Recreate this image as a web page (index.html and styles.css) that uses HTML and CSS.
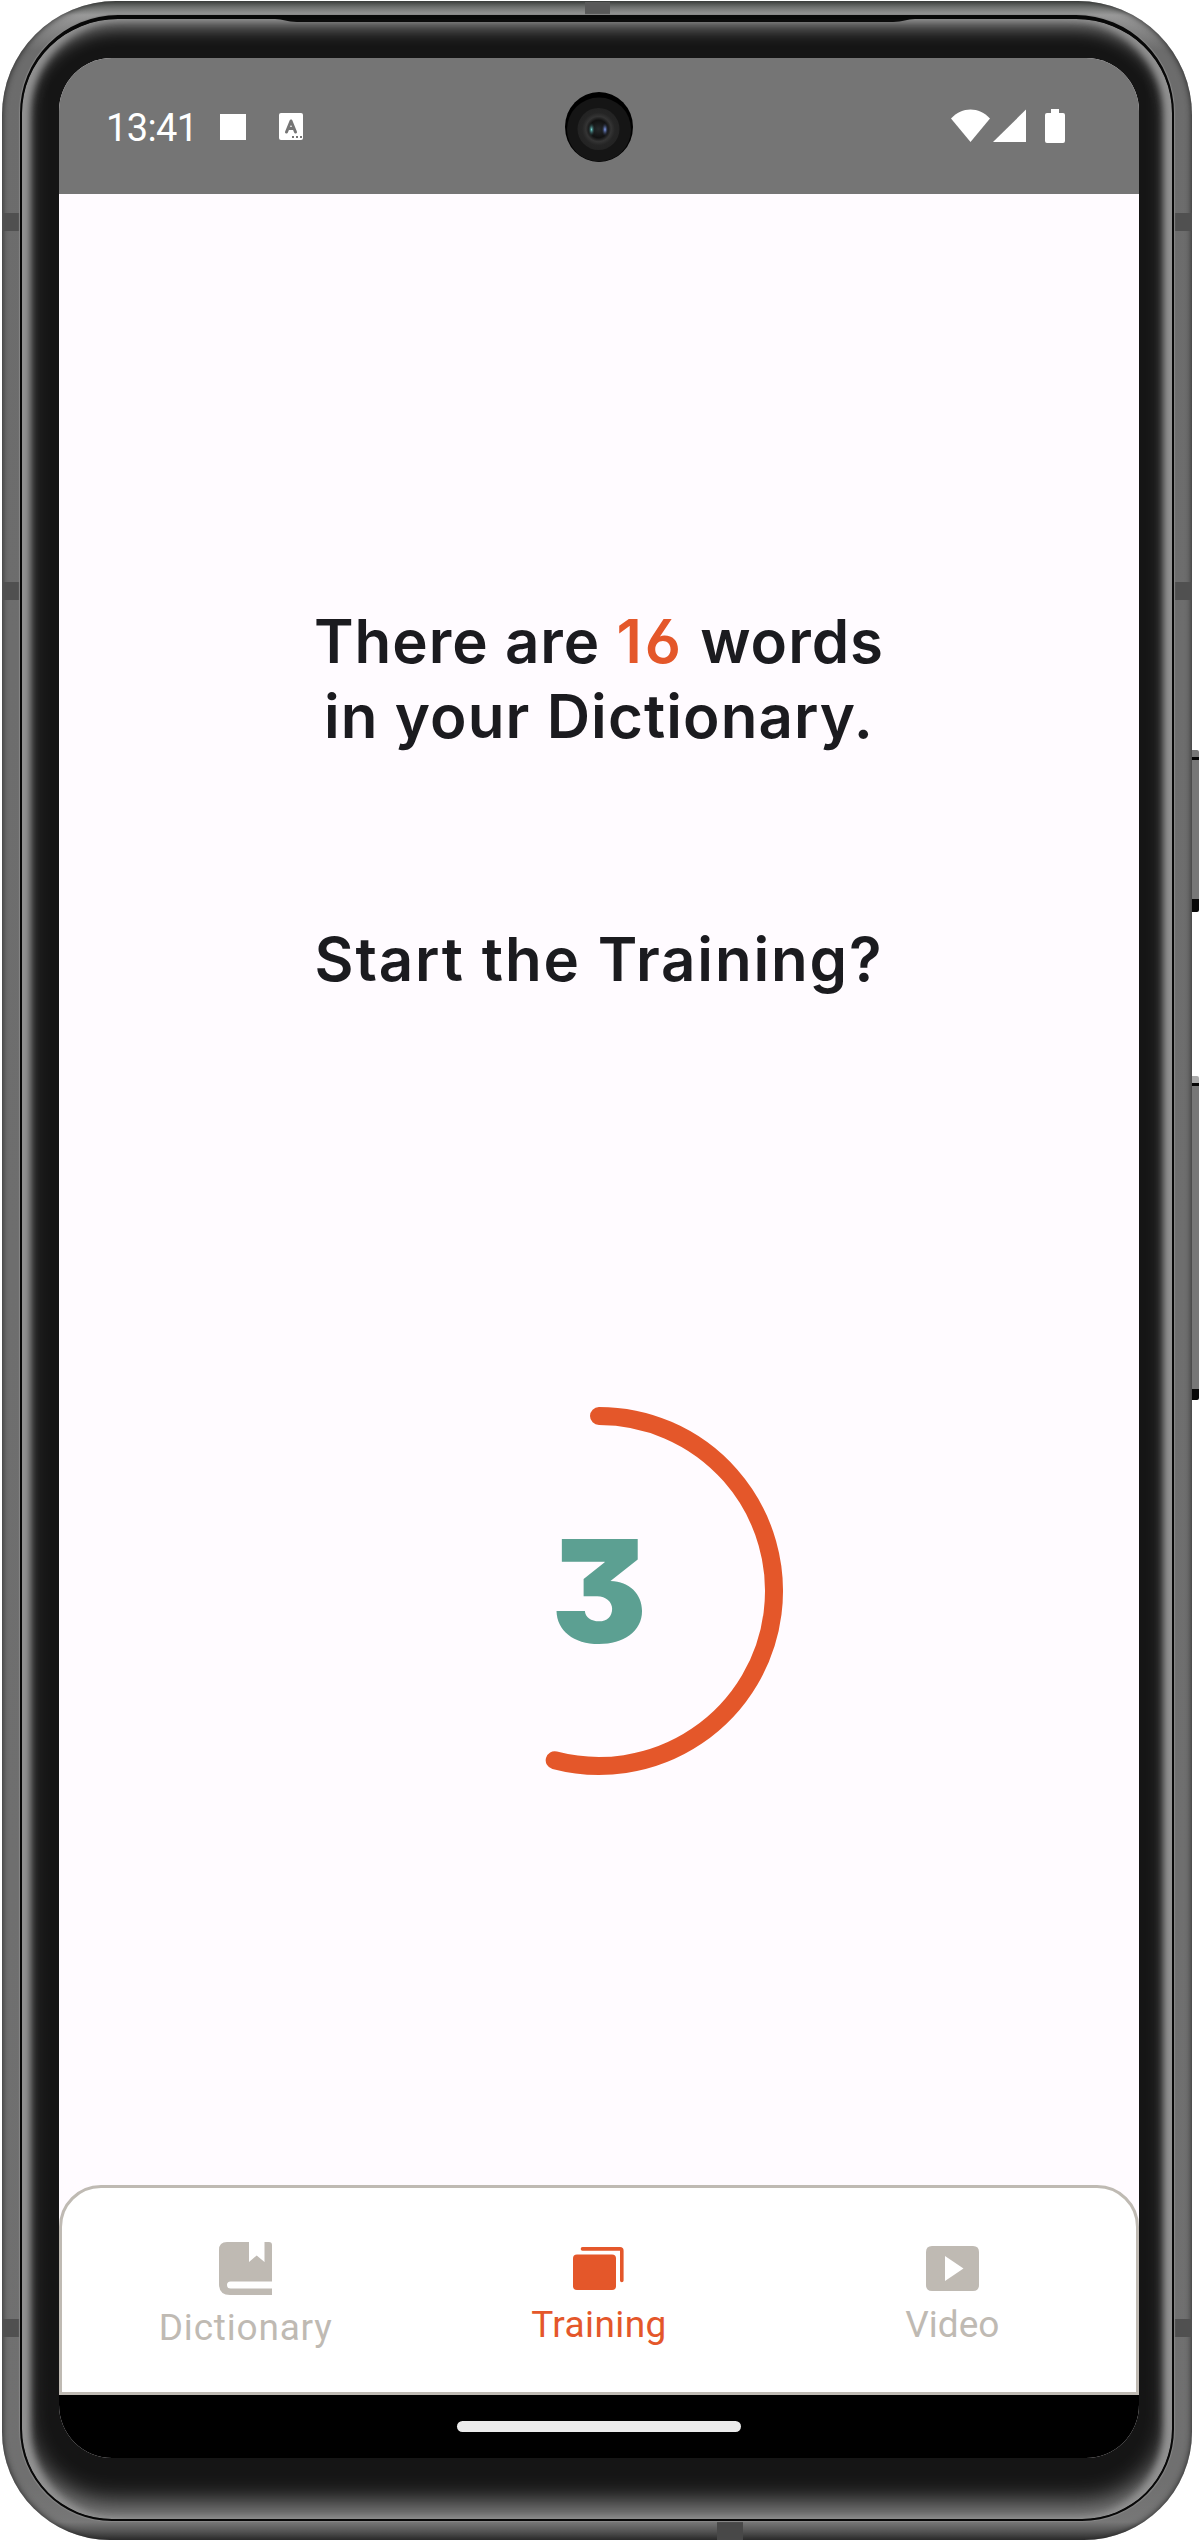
FILE: index.html
```html
<!DOCTYPE html>
<html lang="en">
<head>
<meta charset="utf-8">
<title>Training</title>
<link rel="stylesheet" href="styles.css">
</head>
<body>
<div class="phone">
  <i class="antenna side left a1"></i><i class="antenna side left a2"></i><i class="antenna side left a3"></i>
  <i class="antenna side right a1"></i><i class="antenna side right a2"></i><i class="antenna side right a3"></i>
  <i class="antenna top"></i><i class="antenna bottom"></i>
  <i class="button power"></i><i class="button volume"></i>
  <div class="glass">
    <svg class="earpiece" width="640" height="5" viewBox="0 0 640 5"><path d="M0 0H640C632 0 628 3 618 3H22C12 3 8 0 0 0Z" fill="#0b0b0b"/></svg>
    <div class="screen">
      <header class="status">
        <span class="clock">13:41</span>
        <i class="square"></i>
        <svg class="keyboard" width="24" height="27" viewBox="0 0 24 27"><rect width="24" height="27" rx="2" fill="#fff"/><path d="M7.500 19L12 8L16.500 19M9 15.500H15" fill="none" stroke="#757575" stroke-width="3" stroke-linecap="round" stroke-linejoin="round"/><path d="M13 23h2v2h-2zM17 23h2v2h-2zM21 23h2v2h-2z" fill="#757575"/></svg>
        <span class="spacer"></span>
        <svg width="115" height="35" viewBox="0 0 115 35" fill="#fff"><path d="M0 9.500C11-2.500 28-2.500 39 9.500L19.500 33Z"/><path d="M42 33L75 0.500V33Z"/><path d="M100 0h8v4h4q2 0 2 2v26q0 2-2 2h-16q-2 0-2-2V6q0-2 2-2h4z"/></svg>
      </header>
      <svg class="camera" width="70" height="72" viewBox="0 0 70 72">
        <defs>
          <radialGradient id="lens"><stop offset="0" stop-color="#25282a"/><stop offset=".42" stop-color="#111"/><stop offset=".6" stop-color="#343434"/><stop offset=".78" stop-color="#252525"/><stop offset="1" stop-color="#232323"/></radialGradient>
          <radialGradient id="teal"><stop offset="0" stop-color="#6fd0cc"/><stop offset="1" stop-color="#1c2b2d" stop-opacity="0"/></radialGradient>
          <radialGradient id="blue"><stop offset="0" stop-color="#86a2f8"/><stop offset="1" stop-color="#1c222d" stop-opacity="0"/></radialGradient>
        </defs>
        <ellipse cx="35" cy="36" rx="34" ry="35"/><circle cx="35" cy="38.500" r="32" fill="#151515"/><circle cx="34.500" cy="38" r="21" fill="url(#lens)"/>
        <ellipse cx="27.500" cy="38.500" rx="3.500" ry="7" fill="url(#teal)"/><ellipse cx="41" cy="38.500" rx="3.500" ry="7" fill="url(#blue)"/>
      </svg>
      <main class="content">
        <p class="headline"><span class="line l1">There are <b>16</b> words</span><span class="line l2">in your Dictionary.</span></p>
        <p class="question"><span class="line l3">Start the Training?</span></p>
        <div class="countdown">
          <svg class="arc" width="370" height="370" viewBox="0 0 370 370"><path d="M185 10A175 175 0 1 1 140.700 354.300" fill="none" stroke="#e4572a" stroke-width="18" stroke-linecap="round"/></svg>
          <span class="number">3</span>
        </div>
      </main>
      <nav class="tabs">
        <div class="tab dictionary">
          <svg width="53" height="53" viewBox="0 0 53 53" fill="currentColor"><path d="M8 0H30V20L37.700 13.500L45.500 20V0H50Q53 0 53 3V39.500H11.500Q8 39.500 8 43T11.500 46.500H53V53H11Q0 53 0 42V8Q0 0 8 0Z"/></svg>
          <span>Dictionary</span>
        </div>
        <div class="tab training">
          <svg width="51" height="43" viewBox="0 0 51 43"><rect x="0" y="7.500" width="43" height="35.500" rx="4" fill="currentColor"/><path d="M9.500 1.900H47Q48.800 1.900 48.800 3.700V33.500" fill="none" stroke="currentColor" stroke-width="3.600" stroke-linecap="round"/></svg>
          <span>Training</span>
        </div>
        <div class="tab video">
          <svg width="53" height="45" viewBox="0 0 53 45"><path fill="currentColor" fill-rule="evenodd" d="M6 0H47Q53 0 53 6V39Q53 45 47 45H6Q0 45 0 39V6Q0 0 6 0ZM19 10V35L37.500 22.500Z"/></svg>
          <span>Video</span>
        </div>
      </nav>
      <footer class="gesture"><i></i></footer>
    </div>
  </div>
</div>
</body>
</html>
```
FILE: styles.css
```css
* { box-sizing: border-box; }
body { margin: 0; background: #fff; overflow: hidden; }
p { margin: 0; }

.phone {
  position: relative;
  width: 1190px;
  height: 2539px;
  margin: 1px 0 0 2px;
  padding: 14px 18px 19px 18px;
  border-radius: 114px 114px 108px 108px;
  background: linear-gradient(#505451 0, #999 14px, #6c6c6c 50px, #707070 2480px, #777 2521px, #333 2539px);
  box-shadow: inset 0 0 6px #222;
}
.glass {
  position: relative;
  height: 2506px;
  padding: 39px 33px 61px 37px;
  border: 2px solid #080808;
  border-top-width: 4px;
  border-radius: 98px 98px 92px 92px;
  background: #151515;
  box-shadow: inset 8px 0 7px #929292, inset -8px 0 7px #929292, inset 0 9px 17px #808080, inset 0 -17px 25px #818181, 0 0 1px 1px #888;
}
.earpiece { position: absolute; left: 253px; top: 0; }

.antenna { position: absolute; background: #505050; }
.side { width: 18px; height: 18px; }
.left { left: 0; }
.right { right: 0; }
.a1 { top: 212px; }
.a2 { top: 581px; }
.a3 { top: 2318px; }
.antenna.top { left: 583px; top: 1px; width: 25px; height: 14px; background: #595959; }
.antenna.bottom { left: 715px; bottom: 0; width: 26px; height: 18px; background: #484848; }
.button {
  position: absolute;
  left: 1190px;
  width: 7px;
  border-radius: 0 2px 2px 0;
}
.power { top: 749px; height: 162px; background: linear-gradient(#777 0 7px, #050505 7px 10px, #777 10px 149px, #080808 149px); }
.volume { top: 1075px; height: 324px; background: linear-gradient(#aaa 0 7px, #050505 7px 10px, #777 10px 313px, #080808 313px); }

.screen {
  position: relative;
  display: flex;
  flex-direction: column;
  width: 1080px;
  height: 2400px;
  border-radius: 53px;
  overflow: hidden;
  background: #fffbff;
}
.status {
  display: flex;
  align-items: flex-start;
  height: 136px;
  padding: 51px 73px 0 47px;
  background: #757575;
}
.clock {
  width: 114px;
  margin-top: -3px;
  color: #fff;
  font: 400 38px/45px Roboto, sans-serif;
  letter-spacing: -.6px;
}
.square { width: 26px; height: 26px; margin-top: 5px; background: #fff; }
.keyboard { margin: 4px 0 0 33px; }
.spacer { flex: 1; }
.camera { position: absolute; left: 505px; top: 33px; }

.content {
  display: flex;
  flex-direction: column;
  align-items: center;
  height: 1991px;
  padding-top: 410px;
}
.headline, .question {
  text-align: center;
  color: #1b1b1f;
  font: 600 60px/75px Inter, sans-serif;
  font-feature-settings: "ss01" 1;
}
.headline b { color: #e4572a; font-weight: 600; letter-spacing: 3px; }
.line { display: block; white-space: nowrap; }
.l1 { letter-spacing: 1px; }
.l2 { letter-spacing: 1.100px; }
.l3 { letter-spacing: 1.850px; }
.question { margin-top: 168px; }
.countdown {
  position: relative;
  display: grid;
  place-items: center;
  width: 370px;
  height: 370px;
  margin-top: 409px;
}
.arc { position: absolute; inset: 0; }
.number {
  color: #5ca092;
  font: 900 143px/150px Inter, sans-serif;
  font-feature-settings: "cv09" 1;
}

.tabs {
  display: flex;
  height: 210px;
  padding: 0 7px;
  border: 3px solid #bfbab3;
  border-radius: 42px 42px 0 0;
  background: #fff;
}
.tab {
  flex: 1;
  display: flex;
  flex-direction: column;
  align-items: center;
  color: #bfbab3;
  font: 400 37px/44px Roboto, sans-serif;
}
.dictionary { padding-top: 54px; letter-spacing: .8px; }
.dictionary span { margin-top: 11px; }
.training { padding-top: 59px; color: #e4572a; letter-spacing: .4px; }
.training span { margin-top: 13px; }
.video { padding-top: 58px; }
.video span { margin-top: 12px; }

.gesture { display: flex; justify-content: center; height: 63px; padding-top: 26px; background: #000; }
.gesture i { width: 284px; height: 11px; border-radius: 6px; background: #ebebeb; }
```
